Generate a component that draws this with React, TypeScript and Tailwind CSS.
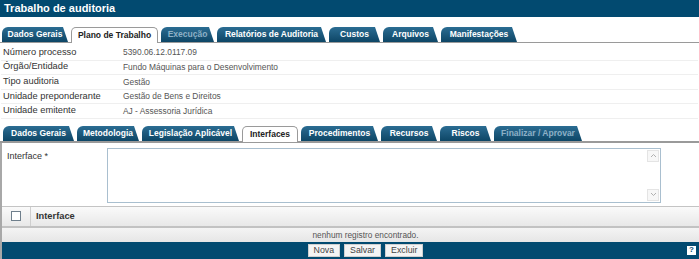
import React from "react";

type Tab = { label: string; active?: boolean; disabled?: boolean; w: number };

const topTabs: Tab[] = [
  { label: "Dados Gerais", w: 66 },
  { label: "Plano de Trabalho", active: true, w: 87 },
  { label: "Execução", disabled: true, w: 53 },
  { label: "Relatórios de Auditoria", w: 109 },
  { label: "Custos", w: 51 },
  { label: "Arquivos", w: 55 },
  { label: "Manifestações", w: 76 },
];

const subTabs: Tab[] = [
  { label: "Dados Gerais", w: 71 },
  { label: "Metodologia", w: 62 },
  { label: "Legislação Aplicável", w: 97 },
  { label: "Interfaces", active: true, w: 56 },
  { label: "Procedimentos", w: 77 },
  { label: "Recursos", w: 56 },
  { label: "Riscos", w: 51 },
  { label: "Finalizar / Aprovar", disabled: true, w: 88 },
];

function TabItem({ t }: { t: Tab }) {
  if (t.active) {
    return (
      <div
        style={{ width: t.w }}
        className="relative h-[16px] -mb-[1px] flex items-center justify-center whitespace-nowrap rounded-t-[5px] border border-b-0 border-[#9a9a9a] bg-white text-[8.5px] font-bold text-[#222] leading-none"
      >
        {t.label}
      </div>
    );
  }
  return (
    <div
      style={{ width: t.w }}
      className={
        "h-[15px] flex items-center justify-center whitespace-nowrap rounded-tl-[6px] rounded-tr-[3px] bg-gradient-to-b from-[#2b6d93] to-[#0d4666] text-[8.5px] font-bold leading-none [clip-path:polygon(0_0,calc(100%-5px)_0,100%_100%,0_100%)] " +
        (t.disabled ? "text-[#8db0c6]" : "text-white")
      }
    >
      {t.label}
    </div>
  );
}

const info: [string, string][] = [
  ["Número processo", "5390.06.12.0117.09"],
  ["Órgão/Entidade", "Fundo Máquinas para o Desenvolvimento"],
  ["Tipo auditoria", "Gestão"],
  ["Unidade preponderante", "Gestão de Bens e Direitos"],
  ["Unidade emitente", "AJ - Assessoria Jurídica"],
];

export default function App() {
  return (
    <div className="w-[699px] h-[259px] overflow-hidden bg-white font-['Liberation_Sans',Arial,sans-serif] flex flex-col">
      <div className="h-[17px] shrink-0 bg-[#024a70] px-[4px] text-[11px] font-bold leading-[17px] text-white">
        Trabalho de auditoria
      </div>

      <div className="mt-[10px] flex h-[16px] shrink-0 items-end gap-[3px] border-b border-[#9a9a9a] pl-[2px]">
        {topTabs.map((t) => (
          <TabItem key={t.label} t={t} />
        ))}
      </div>

      <div className="mt-[3px] flex flex-col px-[1px]">
        {info.map(([k, v]) => (
          <div
            key={k}
            className="flex h-[14.6px] items-center border-b border-[#efefef] text-[9.3px]"
          >
            <div className="w-[122px] pl-[2px] text-[#333]">{k}</div>
            <div className="text-[8.4px] text-[#555]">{v}</div>
          </div>
        ))}
      </div>

      <div className="mt-[8px] flex h-[16px] shrink-0 items-end gap-[3px] border-b-2 border-[#9a9a9a] pl-[3px]">
        {subTabs.map((t) => (
          <TabItem key={t.label} t={t} />
        ))}
      </div>

      <div className="flex flex-1 flex-col border-l-2 border-[#a8a8a8]">
        <div className="flex h-[63px] pt-[5px]">
          <div className="w-[105px] pl-[5px] pt-[2px] text-[9px] text-[#333]">Interface *</div>
          <div className="relative h-[55px] w-[554px] border border-[#a9bfcf] bg-white">
            <div className="absolute right-[1px] top-[1px] bottom-[1px] flex w-[12px] flex-col justify-between">
              <div className="flex h-[12px] items-center justify-center border border-[#e4e4e4] bg-[#f7f7f7]">
                <svg width="7" height="5" viewBox="0 0 7 5"><path d="M1 4 L3.5 1.5 L6 4" fill="none" stroke="#b0b0b0" strokeWidth="1" /></svg>
              </div>
              <div className="flex h-[12px] items-center justify-center border border-[#e4e4e4] bg-[#f7f7f7]">
                <svg width="7" height="5" viewBox="0 0 7 5"><path d="M1 1 L3.5 3.5 L6 1" fill="none" stroke="#b0b0b0" strokeWidth="1" /></svg>
              </div>
            </div>
          </div>
        </div>

        <div className="flex h-[20px] items-center border-t border-[#c4c4c4] bg-gradient-to-b from-[#fafafa] to-[#e8e8e8]">
          <div className="flex h-full w-[29px] items-center justify-center border-r border-[#cfcfcf]">
            <div className="h-[10px] w-[10px] border border-[#6f7f8c] bg-white" />
          </div>
          <div className="pl-[5px] text-[9.3px] font-bold text-[#333]">Interface</div>
        </div>

        <div className="flex h-[16px] items-center justify-center border-t-2 border-[#c2c2c2] bg-gradient-to-b from-[#f4f4f4] to-[#e6e6e6] pl-[30px] text-[8.3px] text-[#555]">
          nenhum registro encontrado.
        </div>

        <div className="relative flex flex-1 items-center justify-center gap-[4px] bg-[#024a70] pl-[30px]">
          {["Nova", "Salvar", "Excluir"].map((b) => (
            <div
              key={b}
              className="flex h-[13px] items-center border border-[#d0d0d0] bg-[#f4f4f4] px-[5px] text-[8.8px] text-[#444]"
            >
              {b}
            </div>
          ))}
          <div className="absolute right-[3px] top-[4px] flex h-[9px] w-[9px] items-center justify-center bg-white text-[8px] font-bold leading-none text-[#024a70]">
            ?
          </div>
        </div>
      </div>
    </div>
  );
}
